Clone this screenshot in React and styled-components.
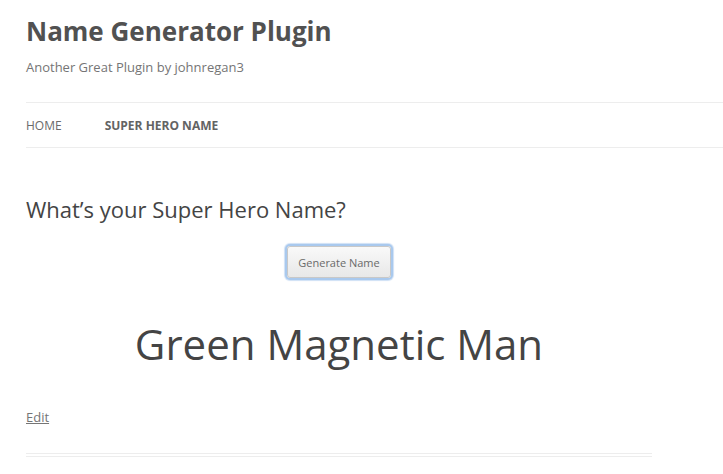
import React from "react"
import styled, { createGlobalStyle } from "styled-components"

const GlobalStyle = createGlobalStyle`
  html, body {
    margin: 0;
    padding: 0;
    background: #fff;
    font-family: "Open Sans", "Liberation Sans", sans-serif;
    color: #444;
  }
`

const Page = styled.div`
  padding: 0 0 0 26px;
  overflow: hidden;
`

const Masthead = styled.header`
  padding-top: 14px;
`

const SiteTitle = styled.h1`
  margin: 0;
  font-size: 26px;
  line-height: 34px;
  font-weight: 700;
  color: #515151;
`

const SiteDescription = styled.h2`
  margin: 9px 0 0;
  font-size: 13px;
  line-height: 20px;
  font-weight: 400;
  color: #757575;
`

const Nav = styled.nav`
  margin-top: 25px;
  display: flex;
  gap: 43px;
  align-items: center;
  height: 44px;
  border-top: 1px solid #ededed;
  border-bottom: 1px solid #ededed;
`

const NavItem = styled.a`
  font-size: 12px;
  text-transform: uppercase;
  text-decoration: none;
  font-weight: ${(p) => (p.$current ? 700 : 400)};
  color: ${(p) => (p.$current ? "#636363" : "#6a6a6a")};
`

const Content = styled.main`
  width: 626px;
`

const EntryTitle = styled.h1`
  margin: 46px 0 0;
  font-size: 22px;
  line-height: 30px;
  font-weight: 400;
  color: #444;
`

const ButtonRow = styled.div`
  display: flex;
  justify-content: center;
  margin-top: 22px;
`

const GenerateButton = styled.button`
  font-family: "Open Sans", "Liberation Sans", sans-serif;
  font-size: 11px;
  color: #6a6a6a;
  white-space: nowrap;
  padding: 0;
  height: 32px;
  width: 104px;
  border: 1px solid #c8c8c8;
  border-radius: 3px;
  background: linear-gradient(#f9f9f9, #e8e8e8);
  box-shadow: 0 0 0 2px #a9c9ee, 0 0 1px 3px #cfe0f5;
  outline: none;
`

const HeroName = styled.div`
  margin-top: 36px;
  text-align: center;
  font-size: 42px;
  line-height: 60px;
  color: #444;
`

const EditLink = styled.a`
  display: inline-block;
  margin-top: 34px;
  font-size: 13px;
  color: #757575;
  text-decoration: underline;
`

const DoubleRule = styled.div`
  margin-top: 26px;
  height: 2px;
  border-top: 1px solid #ededed;
  border-bottom: 1px solid #ededed;
`

export default function App() {
  return (
    <Page>
      <GlobalStyle />
      <Masthead>
        <SiteTitle>Name Generator Plugin</SiteTitle>
        <SiteDescription>Another Great Plugin by johnregan3</SiteDescription>
      </Masthead>
      <Nav>
        <NavItem href="#">Home</NavItem>
        <NavItem href="#" $current>
          Super Hero Name
        </NavItem>
      </Nav>
      <Content>
        <EntryTitle>What’s your Super Hero Name?</EntryTitle>
        <ButtonRow>
          <GenerateButton>Generate Name</GenerateButton>
        </ButtonRow>
        <HeroName>Green Magnetic Man</HeroName>
        <EditLink href="#">Edit</EditLink>
        <DoubleRule />
      </Content>
    </Page>
  )
}
